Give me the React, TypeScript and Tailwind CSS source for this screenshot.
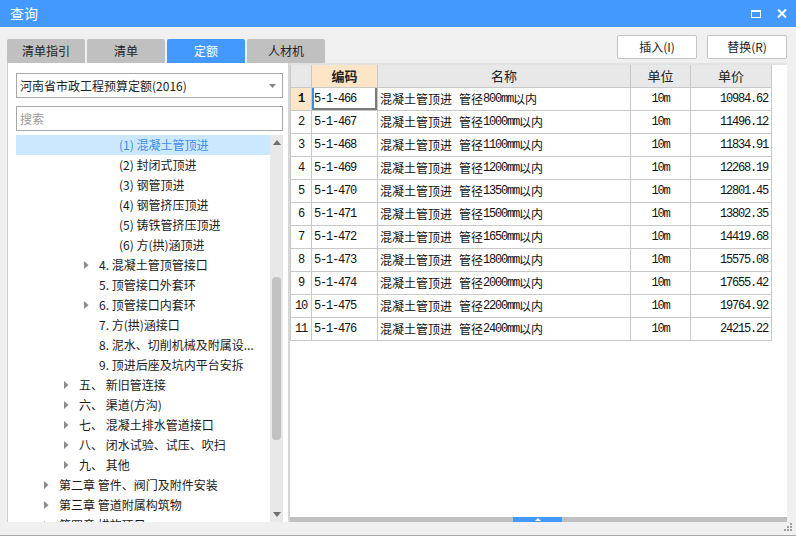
import React from "react";

const CN = { fontFamily: '"Noto Sans CJK SC", "Noto Sans", sans-serif' };
const MONO = { fontFamily: '"Liberation Mono", "Noto Sans CJK SC", monospace' };

type TreeItem = { level: 0 | 1 | 2 | 3; text: string; arrow?: boolean; selected?: boolean };

const tree: TreeItem[] = [
  { level: 3, text: "(1) 混凝土管顶进", selected: true },
  { level: 3, text: "(2) 封闭式顶进" },
  { level: 3, text: "(3) 钢管顶进" },
  { level: 3, text: "(4) 钢管挤压顶进" },
  { level: 3, text: "(5) 铸铁管挤压顶进" },
  { level: 3, text: "(6) 方(拱)涵顶进" },
  { level: 2, text: "4. 混凝土管顶管接口", arrow: true },
  { level: 2, text: "5. 顶管接口外套环" },
  { level: 2, text: "6. 顶管接口内套环", arrow: true },
  { level: 2, text: "7. 方(拱)涵接口" },
  { level: 2, text: "8. 泥水、切削机械及附属设..." },
  { level: 2, text: "9. 顶进后座及坑内平台安拆" },
  { level: 1, text: "五、 新旧管连接", arrow: true },
  { level: 1, text: "六、 渠道(方沟)", arrow: true },
  { level: 1, text: "七、 混凝土排水管道接口", arrow: true },
  { level: 1, text: "八、 闭水试验、试压、吹扫", arrow: true },
  { level: 1, text: "九、 其他", arrow: true },
  { level: 0, text: "第二章 管件、阀门及附件安装", arrow: true },
  { level: 0, text: "第三章 管道附属构筑物", arrow: true },
  { level: 0, text: "第四章 措施项目", arrow: true },
];

const indent = {
  0: "pl-[28px]",
  1: "pl-[48px]",
  2: "pl-[68px]",
  3: "pl-[88px]",
};

const rows = [
  ["5-1-466", "800", "10984.62"],
  ["5-1-467", "1000", "11496.12"],
  ["5-1-468", "1100", "11834.91"],
  ["5-1-469", "1200", "12268.19"],
  ["5-1-470", "1350", "12801.45"],
  ["5-1-471", "1500", "13802.35"],
  ["5-1-472", "1650", "14419.68"],
  ["5-1-473", "1800", "15575.08"],
  ["5-1-474", "2000", "17655.42"],
  ["5-1-475", "2200", "19764.92"],
  ["5-1-476", "2400", "24215.22"],
];

const tabs = ["清单指引", "清单", "定额", "人材机"];

function Arrow() {
  return (
    <svg width="5" height="8" viewBox="0 0 5 8">
      <polygon points="0,0 4.5,4 0,8" fill="#8a8a8a" />
    </svg>
  );
}

export default function App() {
  return (
    <div
      className="flex h-[536px] w-[796px] flex-col overflow-hidden border-b border-[#a8a8a8] bg-[#f0f0f0] text-[#222]"
      style={CN}
    >
      {/* title bar */}
      <div className="flex h-[27px] shrink-0 items-center bg-[#4499ff] pl-[10px] pr-[9px] text-[14px] text-white">
        <span>查询</span>
        <div className="ml-auto flex items-center gap-[16px]">
          <svg width="10" height="8" viewBox="0 0 10 8">
            <rect x="0.5" y="1" width="9" height="6.5" fill="none" stroke="#fff" strokeWidth="1" />
            <rect x="0" y="0" width="10" height="2" fill="#fff" />
          </svg>
          <svg width="10" height="9" viewBox="0 0 10 9">
            <path d="M1 0.5 L9 8.5 M9 0.5 L1 8.5" stroke="#fff" strokeWidth="2" />
          </svg>
        </div>
      </div>

      {/* tabs + buttons */}
      <div className="flex h-[36px] shrink-0 items-end pl-[7px] pr-[9px]">
        <div className="flex gap-[2px]">
          {tabs.map((t) => (
            <div
              key={t}
              className={
                t === "定额"
                  ? "flex h-[24px] w-[78px] items-center justify-center rounded-t-[2px] bg-[#4499ff] text-[12px] text-white"
                  : "flex h-[24px] w-[78px] items-center justify-center rounded-t-[2px] bg-[#c0c0c0] text-[12px] text-[#222]"
              }
            >
              {t}
            </div>
          ))}
        </div>
        <div className="mb-[4px] ml-auto flex gap-[10px]">
          <button className="flex h-[24px] w-[80px] items-center justify-center rounded-[2px] border border-[#c4c4c4] bg-white text-[12px] text-[#222]">
            插入(I)
          </button>
          <button className="flex h-[24px] w-[80px] items-center justify-center rounded-[2px] border border-[#c4c4c4] bg-white text-[12px] text-[#222]">
            替换(R)
          </button>
        </div>
      </div>

      {/* content */}
      <div className="flex h-[459px] shrink-0 pl-[7px] pr-[9px]">
        {/* left panel */}
        <div className="flex w-[281px] flex-col border-l border-[#cfcfcf] bg-white pl-[8px] pr-[5px] pt-[10px]">
          <div className="flex h-[25px] shrink-0 items-center border border-[#a8a8a8] pl-[3px] pr-[6px] text-[12px]">
            <span>河南省市政工程预算定额(2016)</span>
            <svg className="ml-auto" width="7" height="4" viewBox="0 0 7 4">
              <polygon points="0,0 7,0 3.5,4" fill="#888" />
            </svg>
          </div>
          <div className="mt-[8px] flex h-[25px] shrink-0 items-center border border-[#a8a8a8] pl-[3px] text-[12px] text-[#9a9a9a]">
            搜索
          </div>
          <div className="mt-[4px] flex min-h-0 flex-1 overflow-hidden">
            <div className="flex-1 overflow-hidden">
              {tree.map((it, i) => (
                <div
                  key={i}
                  className={
                    (it.selected ? "bg-[#cce8ff] text-[#3d8fe8] " : "text-[#1a1a1a] ") +
                    "flex h-[20px] items-center whitespace-nowrap text-[12px] " +
                    indent[it.level]
                  }
                >
                  <span className="flex w-[15px] shrink-0 items-center">{it.arrow ? <Arrow /> : null}</span>
                  <span>{it.text}</span>
                </div>
              ))}
            </div>
            <div className="flex w-[13px] shrink-0 flex-col items-center bg-[#e8e8e8]">
              <div className="flex h-[14px] shrink-0 items-center justify-center">
                <svg width="8" height="5" viewBox="0 0 8 5">
                  <polygon points="4,0 8,5 0,5" fill="#6e6e6e" />
                </svg>
              </div>
              <div className="h-[128px] shrink-0" />
              <div className="h-[163px] w-[9px] shrink-0 rounded-[4px] bg-[#c2c2c2]" />
              <div className="flex-1" />
              <div className="flex h-[14px] shrink-0 items-start justify-center pt-[4px]">
                <svg width="8" height="5" viewBox="0 0 8 5">
                  <polygon points="0,0 8,0 4,5" fill="#6e6e6e" />
                </svg>
              </div>
            </div>
          </div>
        </div>

        <div className="w-[2px] shrink-0 bg-[#d6d6d6]" />

        {/* right panel */}
        <div className="flex flex-1 flex-col border-t-2 border-[#e2e2e2] bg-white">
          <div className="flex-1">
            <div className="grid h-[23px] w-[481px] grid-cols-[21px_66px_253px_60px_81px] border-l border-[#c8c8c8] text-[13px]">
              <div className="border-b border-r border-[#c8c8c8] bg-[#e8e8e8]" />
              <div className="flex items-center justify-center border-b border-r border-[#c8c8c8] bg-[#fde6c8] font-bold">
                编码
              </div>
              <div className="flex items-center justify-center border-b border-r border-[#c8c8c8] bg-[#e8e8e8]">
                名称
              </div>
              <div className="flex items-center justify-center border-b border-r border-[#c8c8c8] bg-[#e8e8e8]">
                单位
              </div>
              <div className="flex items-center justify-center border-b border-r border-[#c8c8c8] bg-[#e8e8e8]">
                单价
              </div>
            </div>
            {rows.map((r, i) => (
              <div
                key={r[0]}
                className="grid h-[23px] w-[481px] grid-cols-[21px_66px_253px_60px_81px] border-l border-[#c8c8c8] text-[12px] text-[#111]"
              >
                <div
                  className={
                    i === 0
                      ? "flex items-center justify-center border-b border-r border-[#c8c8c8] bg-[#fde6c8] font-bold"
                      : "flex items-center justify-center border-b border-r border-[#c8c8c8]"
                  }
                  style={MONO}
                >
                  <span className="tracking-[-1.2px]">{i + 1}</span>
                </div>
                <div
                  className={
                    i === 0
                      ? "flex items-center border-b border-r border-[#c8c8c8] pl-[2px] shadow-[inset_2px_0_0_#3a8ee6,inset_-2px_-2px_0_#7a7a7a]"
                      : "flex items-center border-b border-r border-[#c8c8c8] pl-[2px]"
                  }
                  style={MONO}
                >
                  <span className="tracking-[-1.2px]">{r[0]}</span>
                </div>
                <div className="flex items-center whitespace-nowrap border-b border-r border-[#c8c8c8] pl-[2px]">
                  <span>混凝土管顶进</span>
                  <span className="ml-[7px]">管径</span>
                  <span className="tracking-[-1.2px]" style={MONO}>
                    {r[1]}mm
                  </span>
                  <span>以内</span>
                </div>
                <div className="flex items-center justify-center border-b border-r border-[#c8c8c8]" style={MONO}>
                  <span className="tracking-[-1.2px]">10m</span>
                </div>
                <div className="flex items-center justify-end border-b border-r border-[#c8c8c8] pr-[3px]" style={MONO}>
                  <span className="tracking-[-1.2px]">{r[2]}</span>
                </div>
              </div>
            ))}
          </div>
          <div className="flex h-[5px] shrink-0 bg-[#c0c0c0]">
            <div className="w-[223px]" />
            <div className="flex w-[49px] items-center justify-center bg-[#4499ff]">
              <svg width="6" height="3" viewBox="0 0 6 3">
                <polygon points="3,0 6,3 0,3" fill="#fff" />
              </svg>
            </div>
          </div>
        </div>
      </div>

      {/* footer with grip */}
      <div className="flex flex-1 items-start justify-end pr-[3px] pt-[1px]">
        <svg width="9" height="9" viewBox="0 0 9 9">
          <rect x="6" y="0" width="2" height="2" fill="#a0a0a0" />
          <rect x="3" y="3" width="2" height="2" fill="#a0a0a0" />
          <rect x="6" y="3" width="2" height="2" fill="#a0a0a0" />
          <rect x="0" y="6" width="2" height="2" fill="#a0a0a0" />
          <rect x="3" y="6" width="2" height="2" fill="#a0a0a0" />
          <rect x="6" y="6" width="2" height="2" fill="#a0a0a0" />
        </svg>
      </div>
    </div>
  );
}
